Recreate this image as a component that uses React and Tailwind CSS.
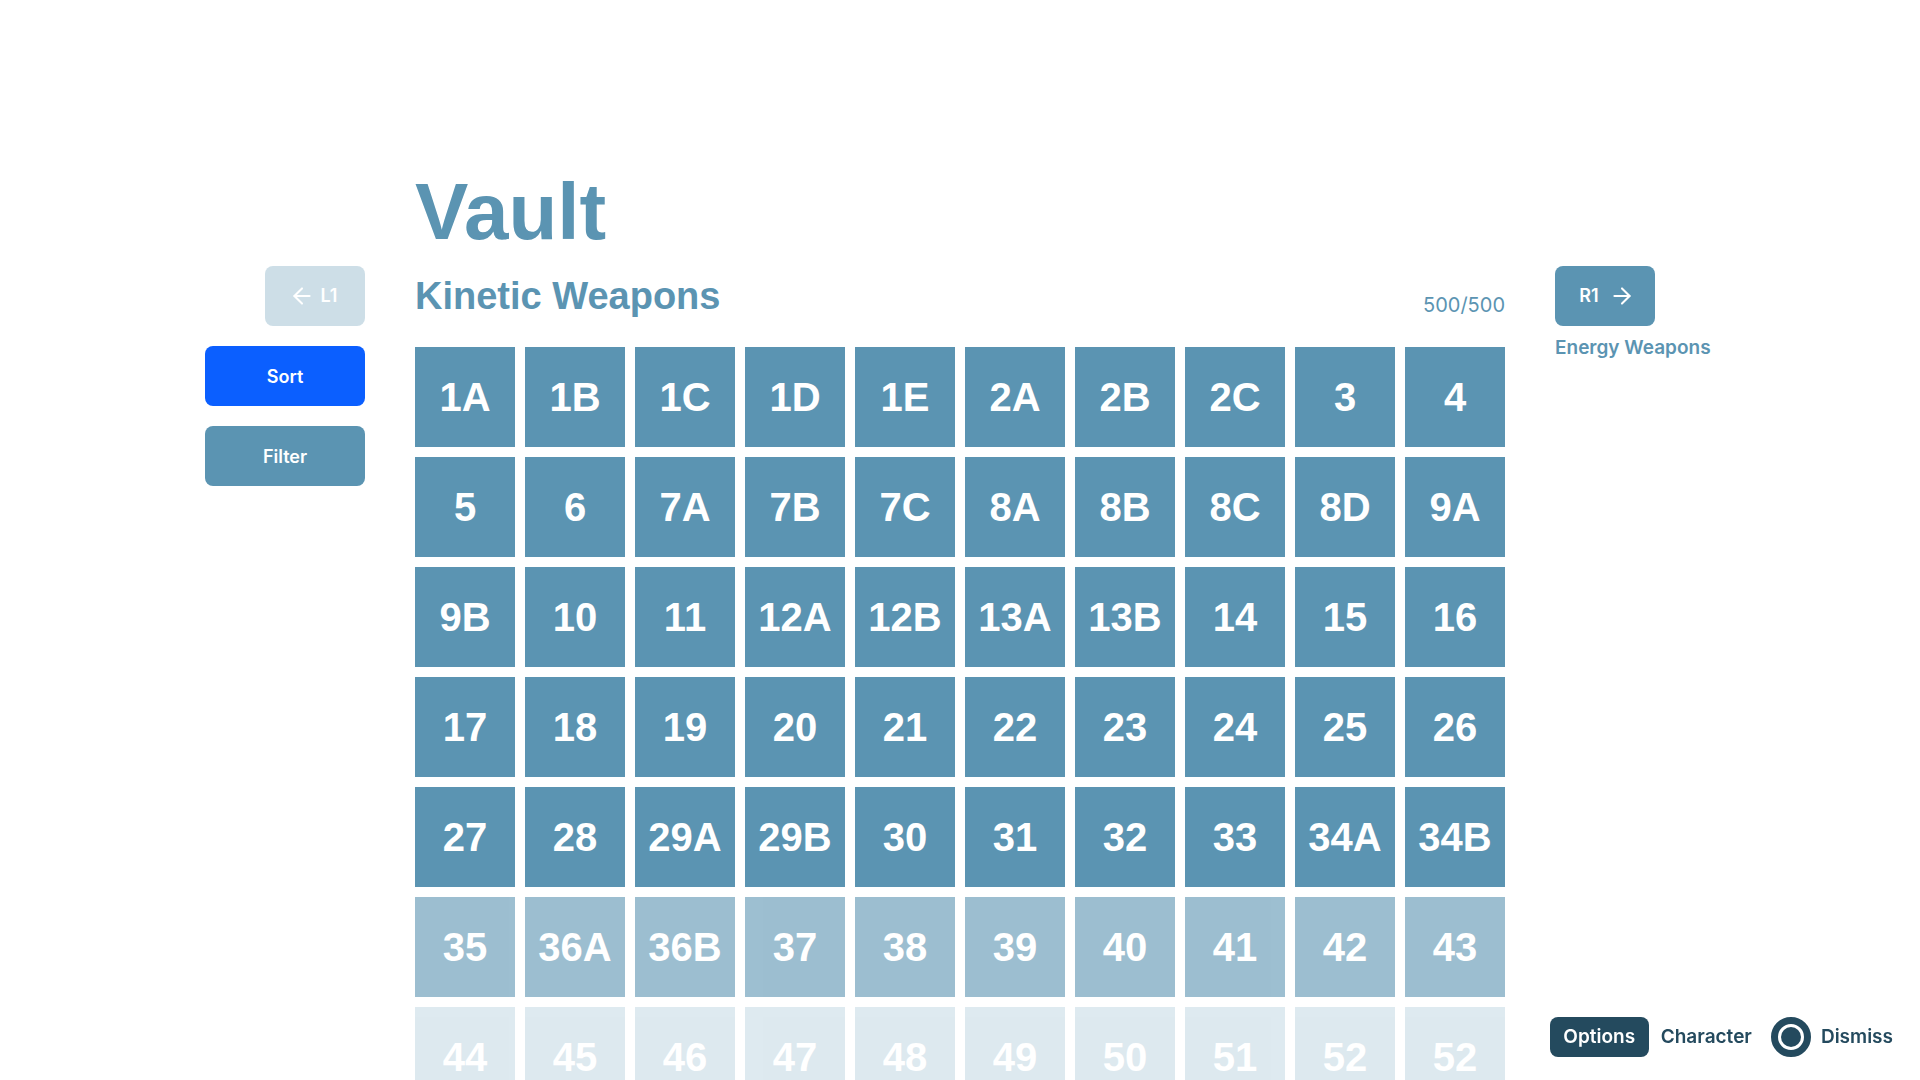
import { ArrowLeft, ArrowRight } from "lucide-react";

// Filas del vault: la opacidad baja en las dos últimas
const rows = [
  { opacity: "opacity-100", items: ["1A", "1B", "1C", "1D", "1E", "2A", "2B", "2C", "3", "4"] },
  { opacity: "opacity-100", items: ["5", "6", "7A", "7B", "7C", "8A", "8B", "8C", "8D", "9A"] },
  { opacity: "opacity-100", items: ["9B", "10", "11", "12A", "12B", "13A", "13B", "14", "15", "16"] },
  { opacity: "opacity-100", items: ["17", "18", "19", "20", "21", "22", "23", "24", "25", "26"] },
  { opacity: "opacity-100", items: ["27", "28", "29A", "29B", "30", "31", "32", "33", "34A", "34B"] },
  { opacity: "opacity-60", items: ["35", "36A", "36B", "37", "38", "39", "40", "41", "42", "43"] },
  { opacity: "opacity-20", items: ["44", "45", "46", "47", "48", "49", "50", "51", "52", "52"] },
];

const Tile = ({ label, opacity }) => (
  <div
    className={`h-[100px] bg-[#5b94b2] flex items-center justify-center text-white text-[40px] font-bold font-['Liberation_Sans',Arial,sans-serif] ${opacity}`}
  >
    {label}
  </div>
);

const App = () => {
  return (
    <div className="min-h-screen bg-white font-['Inter',sans-serif] text-[#5b94b2]">
      <div className="flex justify-center items-start gap-[50px] pt-[172px]">
        {/* Columna izquierda */}
        <div className="w-[160px] mt-[94px] flex flex-col items-end gap-5">
          <button className="w-[100px] h-[60px] rounded-lg bg-[#5b94b2] opacity-30 text-white text-lg font-semibold flex items-center justify-center gap-1.5 pr-1">
            <ArrowLeft size={26} strokeWidth={1.9} />
            <span>L1</span>
          </button>
          <button className="w-[160px] h-[60px] pt-0.5 rounded-lg bg-[#0b5fff] text-white text-lg font-semibold">
            Sort
          </button>
          <button className="w-[160px] h-[60px] pt-0.5 rounded-lg bg-[#5b94b2] text-white text-lg font-semibold">
            Filter
          </button>
        </div>

        {/* Centro */}
        <div className="w-[1090px]">
          <h1 className="text-[80px] leading-none font-bold font-['Liberation_Sans',Arial,sans-serif]">
            Vault
          </h1>
          <div className="mt-[25px] flex justify-between items-end">
            <h2 className="text-[38px] leading-none font-bold font-['Liberation_Sans',Arial,sans-serif]">
              Kinetic Weapons
            </h2>
            <span className="text-xl leading-none">500/500</span>
          </div>
          <div className="mt-[32px] grid grid-cols-10 gap-[10px]">
            {rows.map((row, r) =>
              row.items.map((item, i) => (
                <Tile key={`${r}-${i}`} label={item} opacity={row.opacity} />
              ))
            )}
          </div>
        </div>

        {/* Columna derecha */}
        <div className="w-[160px] mt-[94px] flex flex-col items-start">
          <button className="w-[100px] h-[60px] rounded-lg bg-[#5b94b2] text-white text-lg font-semibold flex items-center justify-center gap-2.5 pl-1">
            <span>R1</span>
            <ArrowRight size={26} strokeWidth={1.9} />
          </button>
          <span className="mt-2 text-[19px] leading-7 font-semibold">Energy Weapons</span>
        </div>
      </div>

      {/* Barra de ayuda */}
      <div className="fixed right-[27px] bottom-[23px] flex items-center text-[#244a5e] text-[19px] font-semibold">
        <span className="h-10 w-[99px] rounded-lg bg-[#244a5e] text-white flex items-center justify-center">
          Options
        </span>
        <span className="ml-3">Character</span>
        <span className="ml-[19px] w-10 h-10 rounded-full border-[7px] border-[#244a5e] flex items-center justify-center">
          <span className="w-5 h-5 rounded-full bg-[#244a5e]" />
        </span>
        <span className="ml-2.5">Dismiss</span>
      </div>
    </div>
  );
};

export default App;
